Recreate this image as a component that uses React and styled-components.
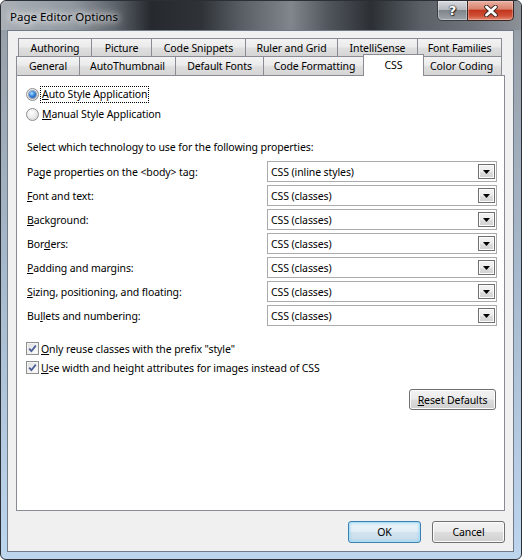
import styled, { createGlobalStyle } from "styled-components";

const GlobalStyle = createGlobalStyle`
  html, body {
    margin: 0;
    padding: 0;
    background: #ffffff;
  }
  body {
    font-family: "Noto Sans", "Liberation Sans", sans-serif;
    font-size: 10.5px;
    letter-spacing: -0.1px;
    color: #000;
  }
`;

const rowOneTabs = [
  { label: "Authoring", w: 74 },
  { label: "Picture", w: 61 },
  { label: "Code Snippets", w: 95 },
  { label: "Ruler and Grid", w: 93 },
  { label: "IntelliSense", w: 81 },
  { label: "Font Families", w: 85 },
];

const rowTwoTabs = [
  { label: "General", w: 64 },
  { label: "AutoThumbnail", w: 97 },
  { label: "Default Fonts", w: 89 },
  { label: "Code Formatting", w: 103 },
  { label: "CSS", w: 61, selected: true },
  { label: "Color Coding", w: 81 },
];

const properties = [
  { pre: "Pa", key: "g", post: "e properties on the <body> tag:", value: "CSS (inline styles)" },
  { pre: "", key: "F", post: "ont and text:", value: "CSS (classes)" },
  { pre: "", key: "B", post: "ackground:", value: "CSS (classes)" },
  { pre: "Bor", key: "d", post: "ers:", value: "CSS (classes)" },
  { pre: "", key: "P", post: "adding and margins:", value: "CSS (classes)" },
  { pre: "", key: "S", post: "izing, positioning, and floating:", value: "CSS (classes)" },
  { pre: "Bu", key: "l", post: "lets and numbering:", value: "CSS (classes)" },
];

function CheckMark() {
  return (
    <svg width="11" height="11" viewBox="0 0 11 11">
      <path d="M2.2 5.6 L4.4 8.2 L8.8 2.6" stroke="#4a5e96" strokeWidth="1.8" fill="none" />
    </svg>
  );
}

export default function App() {
  return (
    <>
      <GlobalStyle />
      <Window>
        <TitleBar>
          <Title>Page Editor Options</Title>
          <CaptionButtons>
            <HelpButton>?</HelpButton>
            <CloseButton>
              <svg width="16" height="12" viewBox="0 0 16 12">
                <path d="M3.5 2 L12.5 10 M12.5 2 L3.5 10" stroke="#3a2a28" strokeWidth="4.6" strokeLinecap="round" />
                <path d="M3.5 2 L12.5 10 M12.5 2 L3.5 10" stroke="#ffffff" strokeWidth="2.8" strokeLinecap="round" />
              </svg>
            </CloseButton>
          </CaptionButtons>
        </TitleBar>

        <Client>
          <TabRow $height={18} $indent={2}>
            {rowOneTabs.map((t) => (
              <Tab key={t.label} $w={t.w}>{t.label}</Tab>
            ))}
          </TabRow>
          <TabRow $height={19} $indent={0}>
            {rowTwoTabs.map((t) => (
              <Tab key={t.label} $w={t.w} $selected={t.selected}>{t.label}</Tab>
            ))}
          </TabRow>

          <Panel>
            <RadioRow>
              <Radio $checked />
              <FocusLabel $focused>
                <Key>A</Key>uto Style Application
              </FocusLabel>
            </RadioRow>
            <RadioRow>
              <Radio />
              <FocusLabel>
                <Key>M</Key>anual Style Application
              </FocusLabel>
            </RadioRow>

            <Intro>Select which technology to use for the following properties:</Intro>

            <PropertyGrid>
              {properties.map((p) => (
                <PropertyRow key={p.post}>
                  <PropertyLabel>
                    {p.pre}
                    <Key>{p.key}</Key>
                    {p.post}
                  </PropertyLabel>
                  <Combo>
                    <ComboText>{p.value}</ComboText>
                    <ComboArrow>
                      <svg width="7" height="4" viewBox="0 0 7 4">
                        <path d="M0 0 H7 L3.5 4 Z" fill="#000" />
                      </svg>
                    </ComboArrow>
                  </Combo>
                </PropertyRow>
              ))}
            </PropertyGrid>

            <CheckRow $first>
              <CheckBox>
                <CheckMark />
              </CheckBox>
              <CheckLabel>
                <Key>O</Key>nly reuse classes with the prefix "style"
              </CheckLabel>
            </CheckRow>
            <CheckRow>
              <CheckBox>
                <CheckMark />
              </CheckBox>
              <CheckLabel>
                <Key>U</Key>se width and height attributes for images instead of CSS
              </CheckLabel>
            </CheckRow>

            <ResetButton>
              <Key>R</Key>eset Defaults
            </ResetButton>
          </Panel>

          <Footer>
            <PushButton $default>OK</PushButton>
            <PushButton>Cancel</PushButton>
          </Footer>
        </Client>
      </Window>
    </>
  );
}

const Window = styled.div`
  box-sizing: border-box;
  width: 522px;
  height: 560px;
  display: flex;
  flex-direction: column;
  border: 1px solid #2c3034;
  border-radius: 6px;
  padding: 0 7px 7px 6px;
  overflow: hidden;
  background: linear-gradient(
    180deg,
    #8a9096 0px,
    #9aa2ab 40px,
    #a6b8cb 260px,
    #bdd6ee 100%
  );
`;

const TitleBar = styled.div`
  height: 29px;
  flex: none;
  display: flex;
  align-items: flex-start;
  margin: 0 -7px 0 -6px;
  padding: 0 7px 0 9px;
  background: linear-gradient(
    90deg,
    #aab0b6 0px,
    #9198a0 70px,
    #5c6269 115px,
    #262a2f 150px,
    #2f3338 200px,
    #585e64 240px,
    #80868c 290px,
    #4e5359 330px,
    #2c3035 370px,
    #5a6066 420px,
    #6e747a 470px,
    #8c9197 100%
  );
`;

const Title = styled.div`
  font-size: 11.5px;
  letter-spacing: 0;
  line-height: 32px;
  color: #000;
  text-shadow: 0 0 6px #ffffff, 0 0 10px rgba(255, 255, 255, 0.9), 0 0 14px rgba(255, 255, 255, 0.7);
`;

const CaptionButtons = styled.div`
  margin-left: auto;
  display: flex;
`;

const HelpButton = styled.div`
  box-sizing: border-box;
  width: 31px;
  height: 20px;
  border: 1px solid #3a3d41;
  border-top: none;
  border-radius: 0 0 0 5px;
  display: flex;
  align-items: center;
  justify-content: center;
  background: linear-gradient(180deg, #d8dbdf 0%, #b6babf 45%, #80858b 50%, #9ea4aa 100%);
  box-shadow: inset 0 0 0 1px rgba(255, 255, 255, 0.35);
  color: #fff;
  font-family: "DejaVu Sans", sans-serif;
  font-weight: bold;
  font-size: 13px;
  text-shadow: 0 0 1px #222, 0 0 2px #222, 1px 1px 1px #333;
`;

const CloseButton = styled.div`
  box-sizing: border-box;
  width: 47px;
  height: 20px;
  margin-left: -1px;
  border: 1px solid #3a2624;
  border-top: none;
  border-radius: 0 0 5px 0;
  display: flex;
  align-items: center;
  justify-content: center;
  background: linear-gradient(180deg, #e9b1a3 0%, #d8826d 42%, #c2361e 50%, #cf4f36 78%, #e38d77 100%);
  box-shadow: inset 0 0 0 1px rgba(255, 220, 210, 0.35);
`;

const Client = styled.div`
  flex: 1;
  display: flex;
  flex-direction: column;
  border: 1px solid #6f7b88;
  background: #f0f0f0;
  padding: 7px 8px 0 8px;
`;

const TabRow = styled.div`
  display: flex;
  align-items: flex-end;
  height: ${(p) => p.$height}px;
  margin-left: ${(p) => p.$indent}px;
`;

const Tab = styled.div`
  box-sizing: border-box;
  flex: none;
  width: ${(p) => p.$w}px;
  height: ${(p) => (p.$selected ? "22px" : "100%")};
  margin: ${(p) => (p.$selected ? "0 -3px -1px -2px" : "0 -1px 0 0")};
  padding-bottom: ${(p) => (p.$selected ? "2px" : "0")};
  display: flex;
  align-items: center;
  justify-content: center;
  border: 1px solid #898c95;
  border-bottom: none;
  background: ${(p) =>
    p.$selected
      ? "#ffffff"
      : "linear-gradient(180deg, #f3f3f3 0%, #ebebeb 45%, #dedede 55%, #d5d5d5 100%)"};
  position: relative;
  z-index: ${(p) => (p.$selected ? 2 : 0)};
  white-space: nowrap;
`;

const Panel = styled.div`
  box-sizing: border-box;
  height: 436px;
  flex: none;
  display: flex;
  flex-direction: column;
  border: 1px solid #898c95;
  background: #ffffff;
  padding: 8px 7px 0 10px;
`;

const Key = styled.span`
  text-decoration: underline;
`;

const RadioRow = styled.div`
  display: flex;
  align-items: center;
  height: 20px;
  margin-left: -1px;
`;

const Radio = styled.span`
  box-sizing: border-box;
  width: 13px;
  height: 13px;
  border-radius: 50%;
  border: 1px solid #8e8f8f;
  margin-right: 1px;
  display: flex;
  align-items: center;
  justify-content: center;
  background: radial-gradient(circle at 40% 35%, #ffffff 0%, #ececec 45%, #cfcfcf 100%);

  &::after {
    content: "";
    display: ${(p) => (p.$checked ? "block" : "none")};
    width: 7px;
    height: 7px;
    border-radius: 50%;
    background: radial-gradient(circle at 40% 35%, #b7e3ff 0%, #3b8ae0 40%, #14479b 100%);
    box-shadow: 0 0 0 1px rgba(30, 60, 110, 0.45);
  }
`;

const FocusLabel = styled.span`
  line-height: 15px;
  padding: 0 1px;
  border: 1px dotted ${(p) => (p.$focused ? "#000" : "transparent")};
`;

const Intro = styled.div`
  margin-top: 15px;
  line-height: 16px;
`;

const PropertyGrid = styled.div`
  margin-top: 6px;
  display: flex;
  flex-direction: column;
  gap: 3px;
`;

const PropertyRow = styled.div`
  display: grid;
  grid-template-columns: 240px 230px;
  align-items: center;
  height: 21px;
`;

const PropertyLabel = styled.div`
  line-height: 16px;
`;

const Combo = styled.div`
  box-sizing: border-box;
  height: 21px;
  display: flex;
  align-items: center;
  border: 1px solid #a9abaf;
  background: #ffffff;
  padding: 0 1px 0 3px;
`;

const ComboText = styled.span`
  flex: 1;
  line-height: 16px;
`;

const ComboArrow = styled.span`
  box-sizing: border-box;
  width: 17px;
  height: 15px;
  display: flex;
  align-items: center;
  justify-content: center;
  padding-top: 1px;
  border: 1px solid #707070;
  background: linear-gradient(180deg, #f4f4f4 0%, #ebebeb 50%, #dddddd 51%, #d2d2d2 100%);
  box-shadow: inset 0 0 0 1px #fcfcfc;
`;

const CheckRow = styled.div`
  display: flex;
  align-items: center;
  height: 19px;
  margin-top: ${(p) => (p.$first ? "13px" : "0")};
  margin-left: -1px;
`;

const CheckBox = styled.span`
  box-sizing: border-box;
  width: 13px;
  height: 13px;
  border: 1px solid #8e8f8f;
  margin-right: 2px;
  display: flex;
  align-items: center;
  justify-content: center;
  background: linear-gradient(135deg, #dcdcdc 0%, #f2f2f2 60%, #ffffff 100%);
  box-shadow: inset 0 0 0 1px #f4f4f4;
`;

const CheckLabel = styled.span`
  line-height: 16px;
`;

const buttonFace = `
  box-sizing: border-box;
  display: flex;
  align-items: center;
  justify-content: center;
  padding: 0;
  border-radius: 3px;
  font-family: "Noto Sans", "Liberation Sans", sans-serif;
  font-size: 10.5px;
  letter-spacing: -0.1px;
  color: #000;
`;

const ResetButton = styled.button`
  ${buttonFace}
  align-self: flex-end;
  margin: 12px 1px 0 0;
  width: 87px;
  height: 21px;
  border: 1px solid #707070;
  box-shadow: inset 0 0 0 1px #fcfcfc;
  background: linear-gradient(180deg, #f2f2f2 0%, #ebebeb 48%, #dddddd 52%, #cfcfcf 100%);
`;

const Footer = styled.div`
  display: flex;
  justify-content: flex-end;
  gap: 11px;
  margin-top: 10px;
`;

const PushButton = styled.button`
  ${buttonFace}
  width: 73px;
  height: 22px;
  border: 1px solid ${(p) => (p.$default ? "#3c7fb1" : "#707070")};
  box-shadow: ${(p) =>
    p.$default
      ? "inset 0 0 0 1px #a9e0f6, inset 0 0 3px 1px rgba(120, 200, 240, 0.6)"
      : "inset 0 0 0 1px #fcfcfc"};
  background: ${(p) =>
    p.$default
      ? "linear-gradient(180deg, #eaf4fa 0%, #e2eef6 48%, #d2e4f0 52%, #c6dbea 100%)"
      : "linear-gradient(180deg, #f2f2f2 0%, #ebebeb 48%, #dddddd 52%, #cfcfcf 100%)"};
`;
